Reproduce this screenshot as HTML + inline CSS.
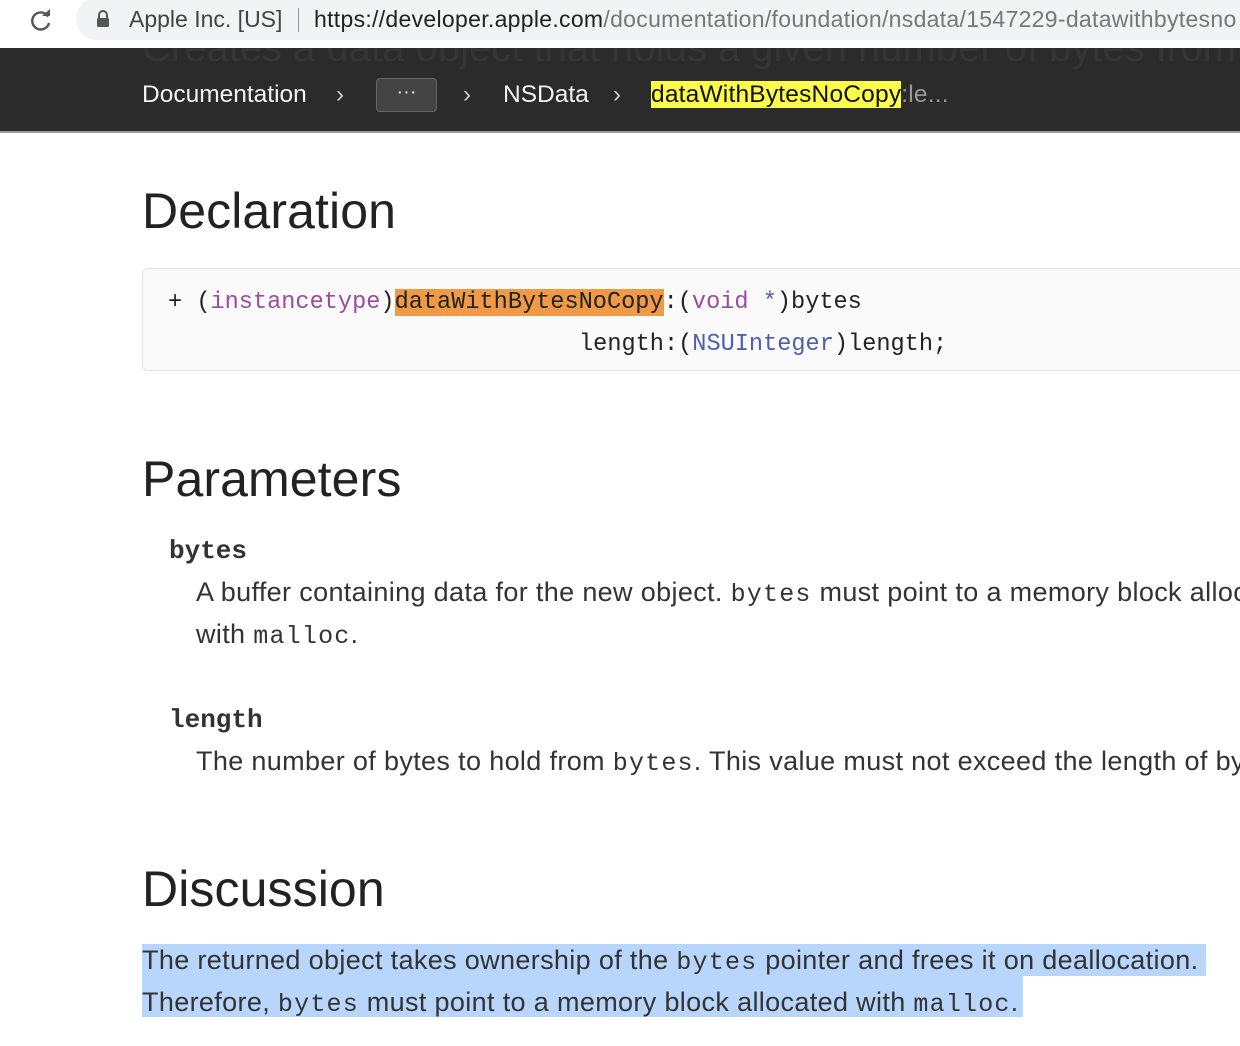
<!DOCTYPE html>
<html><head><meta charset="utf-8"><style>
*{margin:0;padding:0;box-sizing:border-box}
html,body{width:1240px;height:1046px;overflow:hidden;background:#fff;font-family:"Liberation Sans",sans-serif;color:#333}
.a{position:absolute;white-space:nowrap}
.m{font-family:"Liberation Mono",monospace}
.t{font-size:27px;letter-spacing:0.35px;color:#333}
.t .m{font-size:25px;letter-spacing:1.2px}
h2{position:absolute;font-size:50px;font-weight:normal;color:#222;letter-spacing:0.1px;white-space:nowrap}
.pu{color:#9b4c9e}
.bl{color:#4f5fa8}
</style></head><body>
<div class="a" style="left:0;top:0;width:1240px;height:48px;background:#fff"></div>
<svg class="a" style="left:28px;top:8px" width="26" height="26" viewBox="0 0 26 26"><path d="M20 8.5 A8.5 8.5 0 1 0 21 15" fill="none" stroke="#555" stroke-width="2.4"/><path d="M14 8 L22 8 L22 1 Z" fill="#555"/></svg>
<div class="a" style="left:76px;top:-2px;width:1200px;height:42px;background:#f1f3f4;border-radius:21px"></div>
<svg class="a" style="left:96px;top:10px" width="14" height="18" viewBox="0 0 14 18"><path d="M3 8 V5 A4 4 0 0 1 11 5 V8" fill="none" stroke="#555" stroke-width="2"/><rect x="1" y="8" width="12" height="9" rx="1.5" fill="#555"/></svg>
<div class="a" style="left:129px;top:6px;font-size:23px;color:#444">Apple Inc. [US]</div>
<div class="a" style="left:298px;top:8px;width:1px;height:24px;background:#999"></div>
<div class="a" style="left:314px;top:6px;font-size:23px;color:#777;letter-spacing:0.3px"><span style="color:#222">https://developer.apple.com</span>/documentation/foundation/nsdata/1547229-datawithbytesno</div>
<div class="a" style="left:0;top:48px;width:1240px;height:85px;background:#2b2b2b;border-bottom:2px solid #999;overflow:hidden">
<div class="a" style="left:142px;top:-22px;font-size:40px;color:#353535">Creates a data object that holds a given number of bytes from a given buffer.</div>
<div class="a" style="left:142px;top:33px;font-size:24.5px;color:#f2f2f2">Documentation</div>
<div class="a" style="left:336px;top:33px;font-size:24px;color:#ccc">›</div>
<div class="a" style="left:376px;top:30px;width:61px;height:34px;border:1px solid #666;background:#444;border-radius:4px;color:#ddd;text-align:center;font-size:20px;line-height:26px">···</div>
<div class="a" style="left:463px;top:33px;font-size:24px;color:#ccc">›</div>
<div class="a" style="left:503px;top:33px;font-size:24.5px;color:#f2f2f2">NSData</div>
<div class="a" style="left:613px;top:33px;font-size:24px;color:#ccc">›</div>
<div class="a" style="left:651px;top:33px;font-size:24.5px;color:#999;letter-spacing:0.2px"><span style="background:#fbfb4a;color:#111">dataWithBytesNoCopy</span>:le...</div>
</div>
<h2 style="left:142px;top:182px">Declaration</h2>
<div class="a" style="left:142px;top:268px;width:1110px;height:103px;background:#fafafa;border:1px solid #e4e4e4;border-radius:6px"></div>
<div class="a m" style="left:168px;top:289px;font-size:23.6px;color:#222">+ (<span class="pu">instancetype</span>)<span style="background:#f09a48">dataWithBytesNoCopy</span>:(<span class="pu">void</span> <span class="bl">*</span>)bytes</div>
<div class="a m" style="left:579px;top:331px;font-size:23.6px;color:#222">length:(<span class="bl">NSUInteger</span>)length;</div>
<h2 style="left:142px;top:450px">Parameters</h2>
<div class="a m" style="left:169px;top:536px;font-size:26px;font-weight:bold;color:#333">bytes</div>
<div class="a t" style="left:196px;top:577px">A buffer containing data for the new object. <span class="m">bytes</span> must point to a memory block allocated</div>
<div class="a t" style="left:196px;top:619px">with <span class="m">malloc</span>.</div>
<div class="a m" style="left:169px;top:705px;font-size:26px;font-weight:bold;color:#333">length</div>
<div class="a t" style="left:196px;top:746px">The number of bytes to hold from <span class="m">bytes</span>. This value must not exceed the length of bytes.</div>
<h2 style="left:142px;top:860px">Discussion</h2>
<div class="a" style="left:142px;top:944px;width:1064px;height:32px;background:#b8d5fb"></div>
<div class="a" style="left:142px;top:975px;width:881px;height:42px;background:#b8d5fb"></div>
<div class="a t" style="left:142px;top:945px">The returned object takes ownership of the <span class="m">bytes</span> pointer and frees it on deallocation.</div>
<div class="a t" style="left:142px;top:987px">Therefore, <span class="m">bytes</span> must point to a memory block allocated with <span class="m">malloc</span>.</div>
</body></html>
